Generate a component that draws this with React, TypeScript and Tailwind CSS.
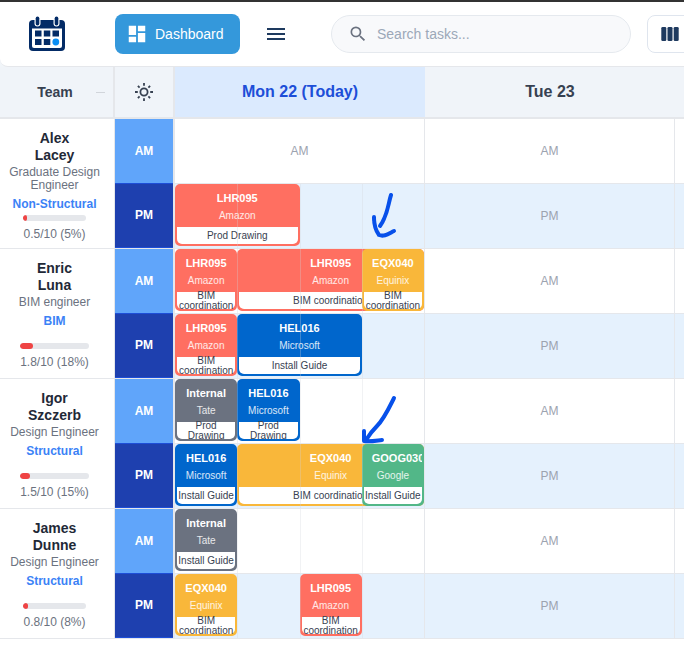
import type { ReactNode } from "react";
import { MdDashboard, MdMenu, MdSearch } from "react-icons/md";

type Tone = "coral" | "blue" | "amber" | "gray" | "green";

interface Task {
  code: string;
  client: string;
  work: string;
  tone: Tone;
  place: string;
}

interface Member {
  first: string;
  last: string;
  role: string;
  team: string;
  load: string;
  percent: number;
  am: Task[];
  pm: Task[];
}

const TONES: Record<Tone, string> = {
  coral: "bg-[#ff6f61] border-[#ff6f61]",
  blue: "bg-[#0066cc] border-[#0066cc]",
  amber: "bg-[#f9b73a] border-[#f9b73a]",
  gray: "bg-[#6b7280] border-[#6b7280]",
  green: "bg-[#52b788] border-[#52b788]",
};

const amazon = (work: string, place: string): Task => ({ code: "LHR095", client: "Amazon", work, tone: "coral", place });
const equinix = (place: string): Task => ({ code: "EQX040", client: "Equinix", work: "BIM coordination", tone: "amber", place });
const microsoft = (work: string, place: string): Task => ({ code: "HEL016", client: "Microsoft", work, tone: "blue", place });
const internal = (work: string): Task => ({ code: "Internal", client: "Tate", work, tone: "gray", place: "col-start-1" });

const MEMBERS: Member[] = [
  {
    first: "Alex", last: "Lacey", role: "Graduate Design Engineer", team: "Non-Structural", load: "0.5/10 (5%)", percent: 5,
    am: [],
    pm: [amazon("Prod Drawing", "col-start-1 col-span-2")],
  },
  {
    first: "Enric", last: "Luna", role: "BIM engineer", team: "BIM", load: "1.8/10 (18%)", percent: 18,
    am: [
      amazon("BIM coordination", "col-start-1"),
      amazon("BIM coordination", "col-start-2 col-span-3"),
      equinix("col-start-4"),
    ],
    pm: [amazon("BIM coordination", "col-start-1"), microsoft("Install Guide", "col-start-2 col-span-2")],
  },
  {
    first: "Igor", last: "Szczerb", role: "Design Engineer", team: "Structural", load: "1.5/10 (15%)", percent: 15,
    am: [internal("Prod Drawing"), microsoft("Prod Drawing", "col-start-2")],
    pm: [
      microsoft("Install Guide", "col-start-1"),
      equinix("col-start-2 col-span-3"),
      { code: "GOOG030", client: "Google", work: "Install Guide", tone: "green", place: "col-start-4" },
    ],
  },
  {
    first: "James", last: "Dunne", role: "Design Engineer", team: "Structural", load: "0.8/10 (8%)", percent: 8,
    am: [internal("Install Guide")],
    pm: [equinix("col-start-1"), amazon("BIM coordination", "col-start-3")],
  },
];

function Logo() {
  return (
    <svg viewBox="0 0 36 36" className="size-9 shrink-0" role="img" aria-label="Planner">
      <rect x="0" y="4" width="36" height="31" rx="4" fill="#032b66" />
      <path d="M3 12.500h30V30a2 2 0 0 1-2 2H5a2 2 0 0 1-2-2z" fill="#fff" />
      <rect x="5.500" y="0" width="6" height="10.500" rx="3" fill="#fff" />
      <rect x="24.500" y="0" width="6" height="10.500" rx="3" fill="#fff" />
      <rect x="6.700" y="0.500" width="3.600" height="9" rx="1.800" fill="#032b66" />
      <rect x="25.700" y="0.500" width="3.600" height="9" rx="1.800" fill="#032b66" />
      <g fill="#032b66">
        <rect x="6" y="14.500" width="6.500" height="6" />
        <rect x="14.800" y="14.500" width="6.500" height="6" />
        <rect x="23.500" y="14.500" width="6.500" height="6" />
        <rect x="6" y="23" width="6.500" height="6" />
        <rect x="14.800" y="23" width="6.500" height="6" />
      </g>
      <circle cx="26.800" cy="26" r="3.400" fill="#0b8ff5" />
    </svg>
  );
}

function TopBar() {
  return (
    <header className="border-t-2 border-[#333333] bg-[#f1f5f9]">
      <div className="flex h-[65px] items-center overflow-hidden rounded-bl-lg border-b border-[#e5e7eb] bg-white pl-[29px]">
        <Logo />
        <button
          type="button"
          className="ml-[50px] flex h-10 w-[125px] shrink-0 items-center gap-[7px] rounded-lg bg-[#3498db] pl-[11px] text-sm text-white"
        >
          <MdDashboard className="size-[22px]" />
          Dashboard
        </button>
        <button type="button" aria-label="Menu" className="ml-6 shrink-0 text-[#1e3a5f]">
          <MdMenu className="size-6" />
        </button>
        <label className="ml-[43px] flex h-[38px] w-[300px] shrink-0 items-center gap-[9px] rounded-full border border-[#e5e9ee] bg-[#f8f9fb] pl-4">
          <MdSearch className="size-5 shrink-0 text-[#6b7280]" aria-hidden="true" />
          <input
            type="search"
            aria-label="Search tasks"
            placeholder="Search tasks..."
            className="w-full min-w-0 bg-transparent text-sm outline-none placeholder:text-[#9ca8b8]"
          />
        </label>
        <button
          type="button"
          aria-label="Column view"
          className="ml-4 flex h-[38px] w-20 shrink-0 items-center rounded-lg border border-[#dfe5ee] bg-white pl-[13px] text-[#1e3a5f]"
        >
          <svg viewBox="0 0 18 14" className="h-[14px] w-[18px]" fill="currentColor" aria-hidden="true">
            <rect x="0.300" width="5" height="14" rx="1.300" />
            <rect x="6.500" width="5" height="14" rx="1.300" />
            <rect x="12.700" width="5" height="14" rx="1.300" />
          </svg>
        </button>
      </div>
    </header>
  );
}

function SunIcon() {
  return (
    <svg viewBox="0 0 20 20" className="mx-auto size-5" fill="none" stroke="#374151" strokeWidth="1.800" role="img" aria-label="Half day">
      <circle cx="10" cy="10" r="3.600" />
      <path d="M10 1v2.800M10 16.200V19M1 10h2.800M16.200 10H19M3.900 3.900l1.700 1.700M14.400 14.400l1.700 1.700M3.900 16.100l1.700-1.700M14.400 5.600l1.700-1.700" />
    </svg>
  );
}

function TaskCard({ task }: { task: Task }) {
  return (
    <article
      className={`row-start-1 flex h-[62px] min-w-0 flex-col overflow-hidden rounded-[5px] border-2 text-center text-white ${TONES[task.tone]} ${task.place}`}
    >
      <div className="h-[41px] shrink-0 overflow-hidden px-2 pt-[5px] whitespace-nowrap">
        <div className="text-[11px] leading-[14px] font-bold">{task.code}</div>
        <div className="-mx-2 mt-[5px] text-[10px] leading-[12px] text-white/85">{task.client}</div>
      </div>
      <div className="flex h-[17px] items-center justify-center rounded-b-[5px] bg-white text-[10px] leading-[10px] text-[#374151]">
        {task.work}
      </div>
    </article>
  );
}

function DaySlots({ tasks }: { tasks: Task[] }) {
  return (
    <div className="relative grid h-16 grid-cols-4 items-start">
      {tasks.map((task, i) => (
        <TaskCard key={i} task={task} />
      ))}
      <div className="pointer-events-none absolute inset-0 grid grid-cols-4" aria-hidden="true">
        <span className="col-start-2 border-l border-[#d1d5db]/30" />
        <span className="border-l border-[#d1d5db]/30" />
        <span className="border-l border-[#d1d5db]/30" />
      </div>
    </div>
  );
}

function DayCell({ pm, last, children }: { pm?: boolean; last?: boolean; children?: ReactNode }) {
  return (
    <td
      className={`h-[65px] border-b border-[#e5e7eb] p-0 text-center text-xs text-[#9ca3af] ${last ? "" : "border-r"} ${pm ? "bg-[#e5f1fd]" : "bg-white"}`}
    >
      {children}
    </td>
  );
}

function MemberRows({ member }: { member: Member }) {
  return (
    <tbody>
      <tr>
        <th scope="rowgroup" rowSpan={2} className="border-r border-b border-[#e5e7eb] bg-white p-0 font-normal">
          <div className="flex h-[129px] flex-col items-center pt-[11px] pr-[9px] pb-[9px] pl-1 text-center text-xs">
            <div className="shrink-0 text-sm leading-[17px] font-bold text-[#1f2937]">
              <span className="block">{member.first}</span>
              <span className="block">{member.last}</span>
            </div>
            <div className="mt-[2px] shrink-0 leading-[13px] text-[#6b7280]">{member.role}</div>
            <div className="mt-[5px] shrink-0 leading-[14px] font-bold text-[#3b82f6]">{member.team}</div>
            <div className="mt-auto shrink-0 pt-1">
              <div className="h-[6px] overflow-hidden rounded-full bg-[#e5e7eb]">
                <div className="h-full min-w-1 rounded-full bg-[#ef4444]" style={{ width: `${member.percent}%` }} />
              </div>
              <div className="mt-[6px] leading-[14px] text-[#6b7280]">{member.load}</div>
            </div>
          </div>
        </th>
        <th scope="row" className="border-r-2 border-[#e5e7eb] bg-[#60a5fa] p-0 pb-[2px] text-xs font-bold text-white shadow-[inset_0_-1px_0_#1d4ed8]">
          AM
        </th>
        <DayCell>{member.am.length > 0 ? <DaySlots tasks={member.am} /> : "AM"}</DayCell>
        <DayCell>AM</DayCell>
        <DayCell last />
      </tr>
      <tr>
        <th scope="row" className="border-r-2 border-b border-[#e5e7eb] bg-[#1e40af] p-0 pb-[2px] text-xs font-bold text-white shadow-[inset_0_-1px_0_#1d4ed8]">
          PM
        </th>
        <DayCell pm>
          <DaySlots tasks={member.pm} />
        </DayCell>
        <DayCell pm>PM</DayCell>
        <DayCell pm last />
      </tr>
    </tbody>
  );
}

function Annotations() {
  return (
    <svg
      viewBox="0 0 80 260"
      className="pointer-events-none absolute top-[120px] left-[350px] h-[260px] w-20"
      fill="none"
      stroke="#0750ea"
      strokeWidth="4"
      strokeLinecap="round"
      strokeLinejoin="round"
      aria-hidden="true"
    >
      <path d="M41 8C38 17 38 28 30 39M24 30c0 7 2 14 5 18c5 2 9-1 15-4" />
      <path d="M44 211C38 223 34 232 27 239C23 243 19 248 16 253M14 244v10c5 1 10 0 18-1" />
    </svg>
  );
}

export default function App() {
  return (
    <div className="min-h-screen overflow-hidden bg-white font-['Liberation_Sans',Arial,sans-serif]">
      <TopBar />
      <main className="relative">
        <table className="w-full table-fixed border-separate border-spacing-0">
          <colgroup>
            <col className="w-[115px]" />
            <col className="w-[60px]" />
            <col className="w-[250px]" />
            <col className="w-[250px]" />
            <col />
          </colgroup>
          <thead>
            <tr className="text-base text-[#374151]">
              <th scope="col" className="h-[52px] border-r-2 border-b-2 border-[#e5e7eb] bg-[#f0f4f9] p-0 text-sm">
                <div className="flex items-center">
                  <span className="flex-1 pl-[14px]">Team</span>
                  <span className="mr-2 h-px w-[9px] bg-[#d1d5db]" />
                </div>
              </th>
              <th scope="col" className="border-r-2 border-b-2 border-[#e5e7eb] bg-[#f0f4f9] p-0">
                <SunIcon />
              </th>
              <th scope="col" className="border-b-2 border-[#e5e7eb] bg-[#dbeafe] p-0 text-[#1d4ed8]">Mon 22 (Today)</th>
              <th scope="col" className="border-b-2 border-[#e5e7eb] bg-[#f0f4f9] p-0">Tue 23</th>
              <td className="border-b-2 border-[#e5e7eb] bg-[#f0f4f9] p-0" />
            </tr>
          </thead>
          {MEMBERS.map((member) => (
            <MemberRows key={member.first} member={member} />
          ))}
        </table>
        <Annotations />
      </main>
    </div>
  );
}
